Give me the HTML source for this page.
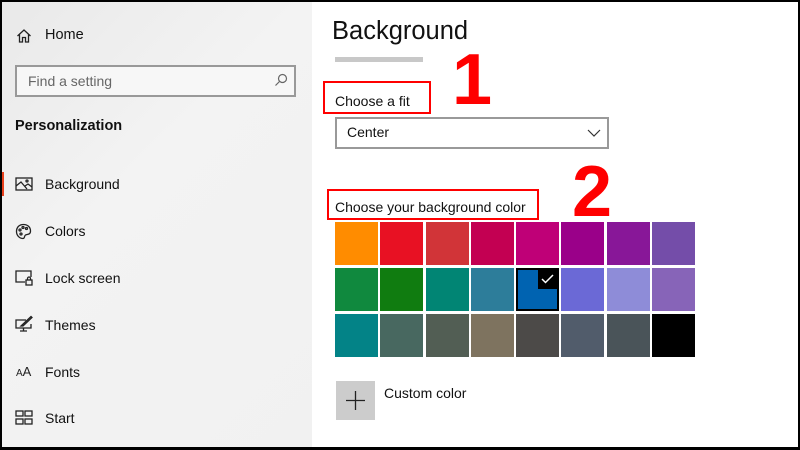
<!DOCTYPE html>
<html><head><meta charset="utf-8"><style>
*{margin:0;padding:0;box-sizing:border-box}
body{width:800px;height:450px;background:#000;position:relative;overflow:hidden;font-family:"Liberation Sans",sans-serif;color:#111}
#frame{position:absolute;left:2px;top:2px;width:796px;height:445px;background:#fff;overflow:hidden}
#side{position:absolute;left:0;top:0;width:310px;height:445px;background:linear-gradient(135deg,#e9e9e9 0%,#f3f3f3 40%,#f1f1f1 100%)}
.a{position:absolute;white-space:nowrap}
.it{font-size:14px;color:#111}
.ic{position:absolute}
.sw{position:absolute;width:43px;height:43px}
</style></head><body>
<div id="frame">
<div id="side">
 <svg class="ic" style="left:14px;top:26px" width="16" height="16" viewBox="0 0 16 16" fill="none" stroke="#222" stroke-width="1.3"><path d="M1.5 8 L8 2 L14.5 8 M3.5 6.5 V14 H6.5 V9.5 H9.5 V14 H12.5 V6.5"/></svg>
 <div class="a it" style="left:43px;top:25px;font-size:14.5px">Home</div>
 <div class="a" style="left:13px;top:63px;width:281px;height:32px;border:2px solid #999;background:#f7f7f7"></div>
 <div class="a" style="left:26px;top:71px;font-size:14px;color:#666">Find a setting</div>
 <svg class="ic" style="left:272px;top:71px" width="14" height="14" viewBox="0 0 14 14" fill="none" stroke="#666" stroke-width="1.2"><circle cx="8.5" cy="5.5" r="4"/><path d="M5.5 8.5 L1.5 12.5"/></svg>
 <div class="a" style="left:13px;top:116px;font-size:14.5px;font-weight:bold;color:#111">Personalization</div>
 <div class="a" style="left:0;top:170px;width:2px;height:24px;background:#e8401c"></div>
 <svg class="ic" style="left:13px;top:175px" width="18" height="15" viewBox="0 0 18 15" fill="none" stroke="#222" stroke-width="1.3"><rect x="1" y="1" width="16" height="12"/><path d="M1 9 L6 5 L12 12 M10 9 L13 7 L17 10"/><circle cx="12" cy="4" r="1"/></svg>
 <div class="a it" style="left:43px;top:174px">Background</div>
 <svg class="ic" style="left:13px;top:221px" width="17" height="17" viewBox="0 0 17 17" fill="none" stroke="#222" stroke-width="1.3"><path d="M8.5 1.5 C4 1.5 1.5 4.5 1.5 8.5 C1.5 13 5 15.5 8 15.5 C10 15.5 9 13 10.5 12 C12 11 15.5 12 15.5 8 C15.5 4 12.5 1.5 8.5 1.5Z"/><circle cx="5" cy="7" r="1"/><circle cx="8" cy="4.5" r="1"/><circle cx="11.5" cy="5.5" r="1"/><circle cx="6" cy="11" r="1"/></svg>
 <div class="a it" style="left:43px;top:221px">Colors</div>
 <svg class="ic" style="left:13px;top:268px" width="18" height="16" viewBox="0 0 18 16" fill="none" stroke="#222" stroke-width="1.3"><path d="M10 12 H1 V1 H16 V7"/><rect x="11" y="10" width="6" height="5"/><path d="M12.5 10 V8.5 A1.5 1.5 0 0 1 15.5 8.5 V10"/></svg>
 <div class="a it" style="left:43px;top:268px">Lock screen</div>
 <svg class="ic" style="left:13px;top:313px" width="18" height="17" viewBox="0 0 18 17" fill="none" stroke="#222" stroke-width="1.3"><path d="M11 5 H1 V13 H16 V9 M8.5 13 V16 M5 16 H12"/><path d="M6 11 L16 1.5 L17 2.5 L8 11 Z"/></svg>
 <div class="a it" style="left:43px;top:315px">Themes</div>
 <div class="a" style="left:14px;top:362px;font-size:10px;color:#222">A<span style="font-size:13px">A</span></div>
 <div class="a it" style="left:43px;top:362px">Fonts</div>
 <svg class="ic" style="left:13px;top:408px" width="18" height="15" viewBox="0 0 18 15" fill="none" stroke="#222" stroke-width="1.3"><rect x="1" y="1" width="7" height="5"/><rect x="10" y="1" width="7" height="5"/><rect x="1" y="9" width="7" height="5"/><rect x="10" y="9" width="7" height="5"/></svg>
 <div class="a it" style="left:43px;top:408px">Start</div>
</div>

<div class="a" style="left:330px;top:15px;font-size:25.5px;color:#111">Background</div>
<div class="a" style="left:333px;top:55px;width:88px;height:5px;background:#c8c8c8"></div>
<div class="a" style="left:321px;top:79px;width:108px;height:33px;border:2px solid #f00"></div>
<div class="a" style="left:333px;top:91px;font-size:14px">Choose a fit</div>
<div class="a" style="left:450px;top:38px;font-size:72px;font-weight:bold;color:#f00;line-height:80px">1</div>
<div class="a" style="left:333px;top:115px;width:274px;height:32px;border:2px solid #999;background:#fff"></div>
<div class="a" style="left:345px;top:122px;font-size:14px">Center</div>
<svg class="ic" style="left:585px;top:127px" width="14" height="9" viewBox="0 0 14 9" fill="none" stroke="#333" stroke-width="1.2"><path d="M1 1 L7 7 L13 1"/></svg>
<div class="a" style="left:570px;top:150px;font-size:72px;font-weight:bold;color:#f00;line-height:80px">2</div>
<div class="a" style="left:325px;top:187px;width:212px;height:31px;border:2px solid #f00"></div>
<div class="a" style="left:333px;top:197px;font-size:14px">Choose your background color</div>

<div class="sw" style="left:333px;top:220px;background:#ff8c00"></div>
<div class="sw" style="left:378px;top:220px;background:#e81123"></div>
<div class="sw" style="left:424px;top:220px;background:#d13438"></div>
<div class="sw" style="left:469px;top:220px;background:#c30052"></div>
<div class="sw" style="left:514px;top:220px;background:#bf0077"></div>
<div class="sw" style="left:559px;top:220px;background:#9a0089"></div>
<div class="sw" style="left:605px;top:220px;background:#881798"></div>
<div class="sw" style="left:650px;top:220px;background:#744da9"></div>

<div class="sw" style="left:333px;top:266px;background:#10893e"></div>
<div class="sw" style="left:378px;top:266px;background:#107c10"></div>
<div class="sw" style="left:424px;top:266px;background:#018574"></div>
<div class="sw" style="left:469px;top:266px;background:#2d7d9a"></div>
<div class="sw" style="left:514px;top:266px;background:#0063b1;border:2px solid #000"><div style="position:absolute;right:0;top:0;width:19px;height:19px;background:#000"></div><svg style="position:absolute;right:3px;top:4px" width="13" height="10" viewBox="0 0 13 10" fill="none" stroke="#fff" stroke-width="1.5"><path d="M1 5 L4.5 8.5 L12 1"/></svg></div>
<div class="sw" style="left:559px;top:266px;background:#6b69d6"></div>
<div class="sw" style="left:605px;top:266px;background:#8e8cd8"></div>
<div class="sw" style="left:650px;top:266px;background:#8764b8"></div>

<div class="sw" style="left:333px;top:312px;background:#038387"></div>
<div class="sw" style="left:378px;top:312px;background:#486860"></div>
<div class="sw" style="left:424px;top:312px;background:#525e54"></div>
<div class="sw" style="left:469px;top:312px;background:#7e735f"></div>
<div class="sw" style="left:514px;top:312px;background:#4c4a48"></div>
<div class="sw" style="left:559px;top:312px;background:#515c6b"></div>
<div class="sw" style="left:605px;top:312px;background:#4a5459"></div>
<div class="sw" style="left:650px;top:312px;background:#000"></div>

<div class="a" style="left:334px;top:379px;width:39px;height:39px;background:#cccccc"></div>
<svg class="ic" style="left:343px;top:388px" width="21" height="21" viewBox="0 0 21 21" stroke="#222" stroke-width="1.3"><path d="M10.5 1 V20 M1 10.5 H20"/></svg>
<div class="a" style="left:382px;top:383px;font-size:14px">Custom color</div>
</div>
</body></html>
